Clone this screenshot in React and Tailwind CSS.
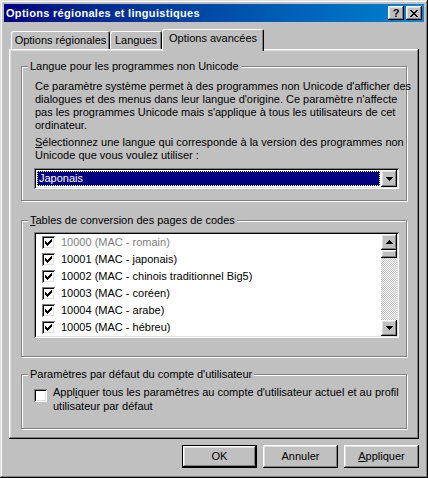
const raised = "shadow-[inset_-1px_-1px_#000,inset_1px_1px_#fff,inset_-2px_-2px_#808080,inset_2px_2px_#dfdfdf]";
const sunken = "shadow-[inset_1px_1px_#808080,inset_-1px_-1px_#fff,inset_2px_2px_#000,inset_-2px_-2px_#dfdfdf]";

function Check() {
  return (
    <svg width="7" height="7" viewBox="0 0 7 7" shapeRendering="crispEdges">
      <path
        fill="#000"
        d="M6 0h1v1h-1z M5 1h2v1h-2z M0 2h1v1h-1z M4 2h3v1h-3z M0 3h2v1h-2z M3 3h3v1h-3z M0 4h5v1h-5z M1 5h3v1h-3z M2 6h1v1h-1z"
      />
    </svg>
  );
}

function CheckBox({ checked }) {
  return (
    <div className={`w-[13px] h-[13px] shrink-0 bg-white flex items-center justify-center ${sunken}`}>
      {checked && <Check />}
    </div>
  );
}

function Arrow({ up }) {
  return (
    <svg width="7" height="4" viewBox="0 0 7 4" shapeRendering="crispEdges">
      <path
        fill="#000"
        d={up ? "M3 0h1v1h-1z M2 1h3v1h-3z M1 2h5v1h-5z M0 3h7v1h-7z" : "M0 0h7v1h-7z M1 1h5v1h-5z M2 2h3v1h-3z M3 3h1v1h-1z"}
      />
    </svg>
  );
}

function Group({ label, className, children }) {
  return (
    <div className={`relative w-[386px] border border-[#808080] shadow-[inset_1px_1px_#fff,1px_1px_#fff] ${className}`}>
      <div className="absolute left-[6px] -top-[7px] px-[2px] bg-[#c0c0c0] leading-[13px] whitespace-nowrap">{label}</div>
      {children}
    </div>
  );
}

const pages = [
  "10000 (MAC - romain)",
  "10001 (MAC - japonais)",
  "10002 (MAC - chinois traditionnel Big5)",
  "10003 (MAC - coréen)",
  "10004 (MAC - arabe)",
  "10005 (MAC - hébreu)",
];

export default function App() {
  return (
    <div className="w-[428px] h-[478px] bg-[#c0c0c0] p-[4px] flex flex-col font-['Liberation_Sans',Arial,sans-serif] text-[11px] leading-[13px] text-black shadow-[inset_-1px_-1px_#000,inset_1px_1px_#dfdfdf,inset_-2px_-2px_#808080,inset_2px_2px_#fff]">
      {/* title bar */}
      <div className="h-[18px] flex items-center pl-[2px] pr-[2px] bg-gradient-to-r from-[#000080] to-[#1084d0]">
        <span className="flex-1 text-white font-bold tracking-[0.3px] whitespace-nowrap">Options régionales et linguistiques</span>
        <div className={`w-[16px] h-[14px] bg-[#c0c0c0] flex items-center justify-center font-bold text-[11px] leading-none pt-[1px] ${raised}`}>?</div>
        <div className={`ml-[2px] w-[16px] h-[14px] bg-[#c0c0c0] flex items-center justify-center ${raised}`}>
          <svg width="8" height="7" viewBox="0 0 8 7" shapeRendering="crispEdges">
            <path fill="#000" d="M0 0h2v1h-2z M6 0h2v1h-2z M1 1h2v1h-2z M5 1h2v1h-2z M2 2h4v1h-4z M3 3h2v1h-2z M2 4h4v1h-4z M1 5h2v1h-2z M5 5h2v1h-2z M0 6h2v1h-2z M6 6h2v1h-2z" />
          </svg>
        </div>
      </div>

      {/* tabs */}
      <div className="mt-[7px] h-[20px] flex items-end pl-[7px]">
        <div className="w-[99px] h-[18px] flex items-center justify-center rounded-t-[2px] shadow-[inset_1px_1px_#fff,inset_-1px_0_#000,inset_-2px_0_#808080] whitespace-nowrap">Options régionales</div>
        <div className="w-[52px] h-[18px] flex items-center justify-center rounded-t-[2px] shadow-[inset_1px_1px_#fff,inset_-1px_0_#000,inset_-2px_0_#808080] whitespace-nowrap">Langues</div>
        <div className="relative z-10 w-[102px] h-[22px] -mb-[2px] pb-[3px] flex items-center justify-center bg-[#c0c0c0] rounded-t-[2px] shadow-[inset_1px_1px_#fff,inset_-1px_0_#000,inset_-2px_0_#808080] whitespace-nowrap">Options avancées</div>
      </div>

      {/* tab panel */}
      <div className={`ml-[5px] w-[410px] h-[390px] pt-[17px] pl-[12px] flex flex-col ${raised}`}>
        <Group label="Langue pour les programmes non Unicode" className="h-[135px] pt-[13px] pl-[13px]">
          <p className="whitespace-nowrap">
            Ce paramètre système permet à des programmes non Unicode d'afficher des<br />
            dialogues et des menus dans leur langue d'origine. Ce paramètre n'affecte<br />
            pas les programmes Unicode mais s'applique à tous les utilisateurs de cet<br />
            ordinateur.
          </p>
          <p className="mt-[4px] whitespace-nowrap">
            <span className="underline">S</span>électionnez une langue qui corresponde à la version des programmes non<br />
            Unicode que vous voulez utiliser :
          </p>
          <div className={`mt-[6px] -ml-[1px] w-[365px] h-[21px] p-[2px] flex bg-white ${sunken}`}>
            <div className="flex-1 p-[1px]">
              <div className="h-full bg-[#000080] border border-dotted border-[#ffff80] text-white pl-[1px] leading-[13px]">Japonais</div>
            </div>
            <div className={`w-[16px] h-[17px] bg-[#c0c0c0] flex items-center justify-center ${raised}`}>
              <Arrow />
            </div>
          </div>
        </Group>

        <Group
          label={<><span className="underline">T</span>ables de conversion des pages de codes</>}
          className="mt-[19px] h-[137px] pt-[11px] pl-[12px]"
        >
          <div className={`w-[365px] h-[106px] p-[2px] flex bg-white ${sunken}`}>
            <div className="flex-1 pl-[6px]">
              {pages.map((p, i) => (
                <div key={p} className="h-[17px] flex items-center whitespace-nowrap">
                  <CheckBox checked />
                  <span className={`ml-[6px] ${i === 0 ? "text-[#808080]" : ""}`}>{p}</span>
                </div>
              ))}
            </div>
            <div className="w-[16px] flex flex-col">
              <div className={`h-[16px] bg-[#c0c0c0] flex items-center justify-center ${raised}`}>
                <Arrow up />
              </div>
              <div className={`h-[8px] bg-[#c0c0c0] ${raised}`} />
              <div className="flex-1 bg-[repeating-conic-gradient(#c0c0c0_0_25%,#fff_0_50%)] bg-[length:2px_2px]" />
              <div className={`h-[16px] bg-[#c0c0c0] flex items-center justify-center ${raised}`}>
                <Arrow />
              </div>
            </div>
          </div>
        </Group>

        <Group label="Paramètres par défaut du compte d'utilisateur" className="mt-[17px] h-[55px] pt-[10px] pl-[12px]">
          <div className="flex items-start">
            <div className="mt-[4px]">
              <CheckBox />
            </div>
            <p className="ml-[6px] leading-[14px] whitespace-nowrap">
              Appl<span className="underline">i</span>quer tous les paramètres au compte d'utilisateur actuel et au profil<br />
              utilisateur par défaut
            </p>
          </div>
        </Group>
      </div>

      {/* buttons */}
      <div className="mt-[6px] pr-[5px] flex justify-end gap-[6px]">
        <button className={`w-[75px] h-[23px] border border-black bg-[#c0c0c0] ${raised}`}>OK</button>
        <button className={`w-[75px] h-[23px] bg-[#c0c0c0] ${raised}`}>Annuler</button>
        <button className={`w-[75px] h-[23px] bg-[#c0c0c0] ${raised}`}>
          <span className="underline">A</span>ppliquer
        </button>
      </div>
    </div>
  );
}
